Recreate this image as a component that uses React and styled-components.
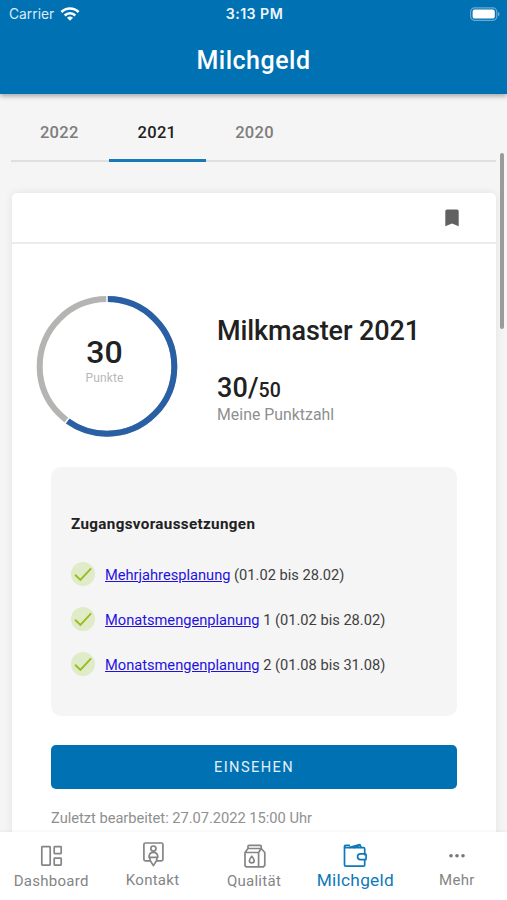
import React from "react";
import styled, { createGlobalStyle } from "styled-components";

const GlobalStyle = createGlobalStyle`
  * {
    box-sizing: border-box;
  }
  body {
    margin: 0;
    background: #f5f5f5;
    font-family: Roboto, "Liberation Sans", sans-serif;
    color: #212121;
  }
`
const Screen = styled.div`
  position: relative;
  display: flex;
  flex-direction: column;
  width: 507px;
  height: 900px;
  overflow: hidden;
`
const Header = styled.header`
  position: relative;
  z-index: 1;
  flex: 0 0 94px;
  background: #0072b3;
  color: #fff;
  box-shadow: 0 2px 5px rgba(0, 0, 0, 0.34);
`
const StatusBar = styled.div`
  display: grid;
  grid-template-columns: 1fr auto 1fr;
  align-items: center;
  height: 28px;
  padding: 0 7px 0 9px;
  font-family: Inter, sans-serif;
  font-size: 13.8px;
  line-height: 28px;
`
const Carrier = styled.span`
  display: flex;
  align-items: center;
  gap: 6px;
  color: #dcebf5;
`
const Clock = styled.span`
  font-size: 14.2px;
  font-weight: 600;
  letter-spacing: 0.45px;
  color: #eef6fb;
`
const Battery = styled.span`
  display: flex;
  justify-content: flex-end;
`
const Title = styled.h1`
  margin: 15px 0 0;
  text-align: center;
  font-size: 25px;
  line-height: 35px;
  font-weight: 500;
  letter-spacing: 0.5px;
`
const Content = styled.main`
  flex: 1;
  min-height: 0;
  overflow: hidden;
  padding: 10px 11px 0;
`
const Tabs = styled.div`
  display: flex;
  height: 58px;
  border-bottom: 2px solid #dfdfdf;
`
const Tab = styled.div`
  width: 97.6px;
  height: 58px;
  padding-right: 1px;
  border-bottom: 3px solid ${(props) => (props.$active ? "#1879b4" : "transparent")};
  text-align: center;
  font-size: 16.5px;
  line-height: 57px;
  font-weight: 500;
  letter-spacing: 0.3px;
  color: ${(props) => (props.$active ? "#212121" : "#7d7d7d")};
`
const Card = styled.section`
  margin: 31px 0 0 1px;
  height: 700px;
  border-radius: 5px;
  background: #fff;
  box-shadow: 0 0 10px rgba(0, 0, 0, 0.08);
`
const CardHeader = styled.div`
  display: flex;
  justify-content: flex-end;
  align-items: center;
  height: 51px;
  padding-right: 37px;
  border-bottom: 2px solid #ebebeb;
`
const CardBody = styled.div`
  padding: 49px 39px 0;
`
const Score = styled.div`
  display: flex;
  height: 174px;
  margin-left: -17px;
`
const Ring = styled.div`
  display: grid;
  width: 146px;
  height: 146px;
`
const RingChart = styled.svg`
  grid-area: 1 / 1;
`
const RingLabel = styled.div`
  grid-area: 1 / 1;
  padding: 41px 5px 0 0;
  text-align: center;
`
const RingValue = styled.div`
  font-size: 32px;
  line-height: 37px;
  font-weight: 500;
`
const RingUnit = styled.div`
  font-size: 12px;
  line-height: 15px;
  letter-spacing: 0.1px;
  color: #b8b8b8;
`
const Summary = styled.div`
  padding: 20px 0 0 37px;
`
const SummaryTitle = styled.h2`
  margin: 0;
  font-size: 27px;
  line-height: 36px;
  font-weight: 500;
  letter-spacing: -0.1px;
`
const Points = styled.div`
  margin-top: 21px;
  font-size: 27px;
  line-height: 36px;
  font-weight: 500;
  letter-spacing: 0.1px;
`
const MaxPoints = styled.span`
  font-size: 19.5px;
`
const PointsLabel = styled.div`
  margin-top: -3px;
  font-size: 15.8px;
  line-height: 18px;
  letter-spacing: 0.04px;
  color: #8f8f8f;
`
const Requirements = styled.div`
  width: 406px;
  height: 249px;
  padding: 45px 20px 0;
  border-radius: 10px;
  background: #f5f5f5;
`
const RequirementsTitle = styled.h3`
  margin: 0 0 16px;
  font-size: 15.2px;
  line-height: 24px;
  font-weight: 700;
  letter-spacing: 0.35px;
`
const Requirement = styled.div`
  display: flex;
  align-items: center;
  gap: 9px;
  height: 45px;
  font-size: 14.65px;
  color: #3f3f3f;
`
const PlanLink = styled.a`
  color: #1f12e0;
  text-decoration: underline;
`
const ViewButton = styled.button`
  display: block;
  width: 406px;
  height: 44px;
  margin: 29px 0 0;
  padding: 0;
  border: 0;
  border-radius: 5px;
  background: #0072b3;
  color: #e3f0f8;
  font-family: inherit;
  font-size: 14.6px;
  letter-spacing: 1.4px;
`
const Edited = styled.div`
  margin-top: 19px;
  font-size: 14.7px;
  line-height: 20px;
  letter-spacing: -0.03px;
  color: #8f8f8f;
`
const ScrollBar = styled.div`
  position: absolute;
  top: 153px;
  right: 3.5px;
  width: 4px;
  height: 176px;
  border-radius: 2px;
  background: #9b9b9b;
`
const NavBar = styled.nav`
  position: relative;
  display: grid;
  grid-template-columns: repeat(5, 1fr);
  flex: 0 0 68px;
  background: #fff;
  box-shadow: 0 0 3px rgba(0, 0, 0, 0.08);
`
const NavItem = styled.div`
  display: flex;
  flex-direction: column;
  align-items: center;
  padding: ${(props) => props.$top || 10}px 0 0 1px;
  font-size: ${(props) => (props.$active ? 17.3 : 15)}px;
  line-height: 20px;
  letter-spacing: 0.27px;
  color: ${(props) => (props.$active ? "#0f78b8" : "#858585")};
`
const NavIcon = styled.svg`
  display: block;
  width: 28px;
  height: 28px;
  fill: none;
  stroke: currentColor;
  stroke-width: 1.7;
  stroke-linejoin: round;
  stroke-linecap: round;
`

const requirements = [
    { plan: "Mehrjahresplanung", detail: "(01.02 bis 28.02)" },
    { plan: "Monatsmengenplanung", detail: "1 (01.02 bis 28.02)" },
    { plan: "Monatsmengenplanung", detail: "2 (01.08 bis 31.08)" },
]

const WifiIcon = () => (
    <svg width="20" height="15" viewBox="0 0 20 15" fill="none" stroke="#fff" strokeWidth="2.5">
        <path d="M1.4 5a12.3 12.3 0 0 1 17.2 0" />
        <path d="M4.7 8.5a7.5 7.5 0 0 1 10.6 0" />
        <path d="M10 13.8l-3-3a4.2 4.2 0 0 1 6 0z" fill="#fff" stroke="none" />
    </svg>
)

const BatteryIcon = () => (
    <svg width="31" height="15" viewBox="0 0 31 15">
        <rect x="1.6" y="0.9" width="26.2" height="12.4" rx="4" fill="none" stroke="#69abd3" strokeWidth="1.2" />
        <rect x="3.6" y="2.6" width="22.2" height="9" rx="2.2" fill="#fff" />
        <path d="M29 4.8c2 .8 2 3.8 0 4.6z" fill="#69abd3" />
    </svg>
)

const CheckIcon = () => (
    <svg width="25" height="25" viewBox="0 0 25 25">
        <circle cx="12" cy="12" r="12" fill="#e0ebc9" />
        <path d="M4.1 12.8l5.3 5.1L20.1 6.4" fill="none" stroke="#9bbd1c" strokeWidth="1.9" />
    </svg>
)

const App = () => {
    return (
        <Screen>
            <GlobalStyle />
            <Header>
                <StatusBar>
                    <Carrier>Carrier <WifiIcon /></Carrier>
                    <Clock>3:13 PM</Clock>
                    <Battery><BatteryIcon /></Battery>
                </StatusBar>
                <Title>Milchgeld</Title>
            </Header>

            <Content>
                <Tabs>
                    <Tab>2022</Tab>
                    <Tab $active>2021</Tab>
                    <Tab>2020</Tab>
                </Tabs>
                <Card>
                    <CardHeader>
                        <svg width="14" height="18" viewBox="0 0 14 18">
                            <path d="M2 0.5h10a1.7 1.7 0 0 1 1.7 1.7V17.3L7 14.5 0.3 17.3V2.2A1.7 1.7 0 0 1 2 0.5z" fill="#616161" />
                        </svg>
                    </CardHeader>
                    <CardBody>
                        <Score>
                            <Ring>
                                <RingChart width="146" height="146" viewBox="0 0 146 146" fill="none" strokeWidth="6">
                                    <circle cx="73" cy="73.4" r="67.3" stroke="#b4b4b2" />
                                    <circle cx="73" cy="73.4" r="67.3" stroke="#285fa5" pathLength="100" strokeDasharray="60 40" transform="rotate(-90 73 73.4)" />
                                    <path d="M73 2v9M30.2 131.2l6-8" stroke="#fff" strokeWidth="1.5" />
                                </RingChart>
                                <RingLabel>
                                    <RingValue>30</RingValue>
                                    <RingUnit>Punkte</RingUnit>
                                </RingLabel>
                            </Ring>
                            <Summary>
                                <SummaryTitle>Milkmaster 2021</SummaryTitle>
                                <Points>30/<MaxPoints>50</MaxPoints></Points>
                                <PointsLabel>Meine Punktzahl</PointsLabel>
                            </Summary>
                        </Score>
                        <Requirements>
                            <RequirementsTitle>Zugangsvoraussetzungen</RequirementsTitle>
                            {requirements.map((item, idx) => (
                                <Requirement key={idx}>
                                    <CheckIcon />
                                    <span><PlanLink href="#">{item.plan}</PlanLink> {item.detail}</span>
                                </Requirement>
                            ))}
                        </Requirements>
                        <ViewButton>EINSEHEN</ViewButton>
                        <Edited>Zuletzt bearbeitet: 27.07.2022 15:00 Uhr</Edited>
                    </CardBody>
                </Card>
            </Content>

            <NavBar>
                <NavItem $top={11}>
                    <NavIcon viewBox="0 0 28 28">
                        <rect x="4.8" y="3.7" width="8.4" height="18.5" rx="0.6" />
                        <rect x="17.2" y="3.7" width="7" height="7" rx="0.6" />
                        <rect x="17.2" y="15.2" width="7" height="7" rx="0.6" />
                    </NavIcon>
                    Dashboard
                </NavItem>
                <NavItem>
                    <NavIcon viewBox="-0.2 0 28 28">
                        <path d="M10.5 18.8H6.2a1.5 1.5 0 0 1-1.5-1.5V2.5A1.5 1.5 0 0 1 6.2 1h16a1.5 1.5 0 0 1 1.5 1.5v14.8a1.5 1.5 0 0 1-1.5 1.5h-4.3" />
                        <circle cx="14.2" cy="6.6" r="2.6" />
                        <path d="M9.8 15.3c0-3.2 1.5-5 4.4-5s4.4 1.8 4.4 5zM10.5 15.8l.6 3 3.1 4.8 3.1-4.8.6-3" />
                    </NavIcon>
                    Kontakt
                </NavItem>
                <NavItem $top={11}>
                    <NavIcon viewBox="0 0 28 28">
                        <path d="M5 9.5h13.6v14.4H6.2L5 22.8zM5 9.5l3-4h13.2l3.6 4v12.9l-1.5 1.5h-4.7V9.5l2.6-4M8 5.5V3.3Q8 2.4 8.9 2.4h11.4q.9 0 .9.9v2.2" />
                        <path d="M11.8 13.2c-1.6 1.9-2.4 3-2.4 4.2a2.4 2.4 0 0 0 4.8 0c0-1.2-.8-2.3-2.4-4.2z" />
                    </NavIcon>
                    Qualität
                </NavItem>
                <NavItem $active>
                    <NavIcon viewBox="0.3 -0.7 28 28">
                        <path d="M24 12V6.1q0-1.2-1.2-1.2H5.2q-1.4 0-1.4-1.3v18.6q0 1.3 1.4 1.3h17.6q1.2 0 1.2-1.2v-5.3" />
                        <path d="M4 3.6q0-1 1.4-1h3.2M9 4.7l10.2-2.9 1.2 2.8M13 4.7q3.3.5 5.5-2M24.4 11.2h-4.6a2.9 2.9 0 0 0 0 5.8h4.6q1 0 1-1v-3.8q0-1-1-1z" />
                    </NavIcon>
                    Milchgeld
                </NavItem>
                <NavItem>
                    <NavIcon viewBox="0 0 28 28">
                        <g fill="#777" stroke="none">
                            <circle cx="8" cy="13.8" r="1.8" />
                            <circle cx="14" cy="13.8" r="1.8" />
                            <circle cx="20" cy="13.8" r="1.8" />
                        </g>
                    </NavIcon>
                    Mehr
                </NavItem>
            </NavBar>
            <ScrollBar />
        </Screen>
    )
}

export default App
